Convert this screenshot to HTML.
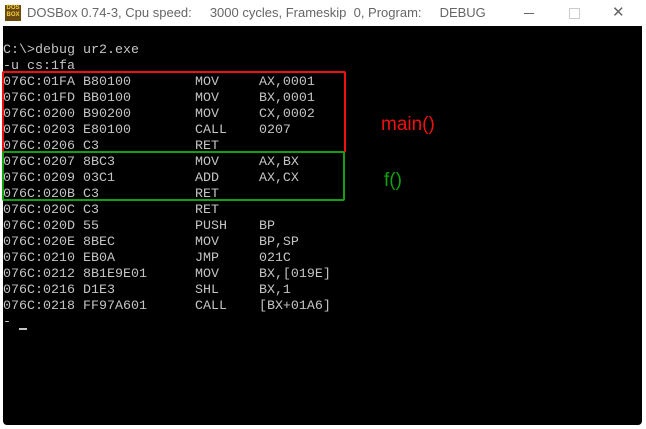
<!DOCTYPE html>
<html><head><style>
body{margin:0;width:646px;height:429px;background:#fff;position:relative;overflow:hidden;font-family:"Liberation Sans",sans-serif}
#tb{position:absolute;left:0;top:0;width:646px;height:26px;background:#fff;border-radius:6px 6px 0 0}
#tt{position:absolute;left:27px;top:5px;font-size:13px;color:#666;white-space:pre}
#ic{position:absolute;left:5px;top:5px;width:16px;height:16px;background:#6b4a10;color:#f4d040;font-size:6px;line-height:7px;text-align:center;font-weight:bold}
#scr{position:absolute;left:3px;top:26px;width:639px;height:399px;background:#000;border-radius:0 0 4px 4px}
pre{position:absolute;left:3px;top:43px;margin:0;font-family:"Liberation Mono",monospace;font-size:13.33px;line-height:16px;color:#c4c4c4}
.box{position:absolute;border:2px solid;border-radius:2px}
</style></head><body>
<div id="tb"><div id="ic">DOS<br>BOX</div><div id="tt">DOSBox 0.74-3, Cpu speed:     3000 cycles, Frameskip  0, Program:     DEBUG</div>
<div style="position:absolute;left:524px;top:13px;width:10px;height:1px;background:#666"></div>
<div style="position:absolute;left:569px;top:8px;width:9px;height:9px;border:1px solid #ccc"></div>
<div style="position:absolute;left:612px;top:3px;font-size:15px;color:#666">✕</div></div>
<div id="scr"></div>
<pre>C:\>debug ur2.exe
-u cs:1fa
076C:01FA B80100        MOV     AX,0001
076C:01FD BB0100        MOV     BX,0001
076C:0200 B90200        MOV     CX,0002
076C:0203 E80100        CALL    0207
076C:0206 C3            RET
076C:0207 8BC3          MOV     AX,BX
076C:0209 03C1          ADD     AX,CX
076C:020B C3            RET
076C:020C C3            RET
076C:020D 55            PUSH    BP
076C:020E 8BEC          MOV     BP,SP
076C:0210 EB0A          JMP     021C
076C:0212 8B1E9E01      MOV     BX,[019E]
076C:0216 D1E3          SHL     BX,1
076C:0218 FF97A601      CALL    [BX+01A6]
-
</pre>
<div style="position:absolute;left:19px;top:328px;width:8px;height:2px;background:#c4c4c4"></div>
<div class="box" style="left:2px;top:71px;width:340px;height:78px;border-color:#f01010"></div>
<div class="box" style="left:2px;top:151px;width:339px;height:46px;border-color:#10a010"></div>
<div style="position:absolute;left:381px;top:114px;font-size:19px;color:#f01010">main()</div>
<div style="position:absolute;left:384px;top:170px;font-size:19px;color:#10a010">f()</div>
</body></html>
